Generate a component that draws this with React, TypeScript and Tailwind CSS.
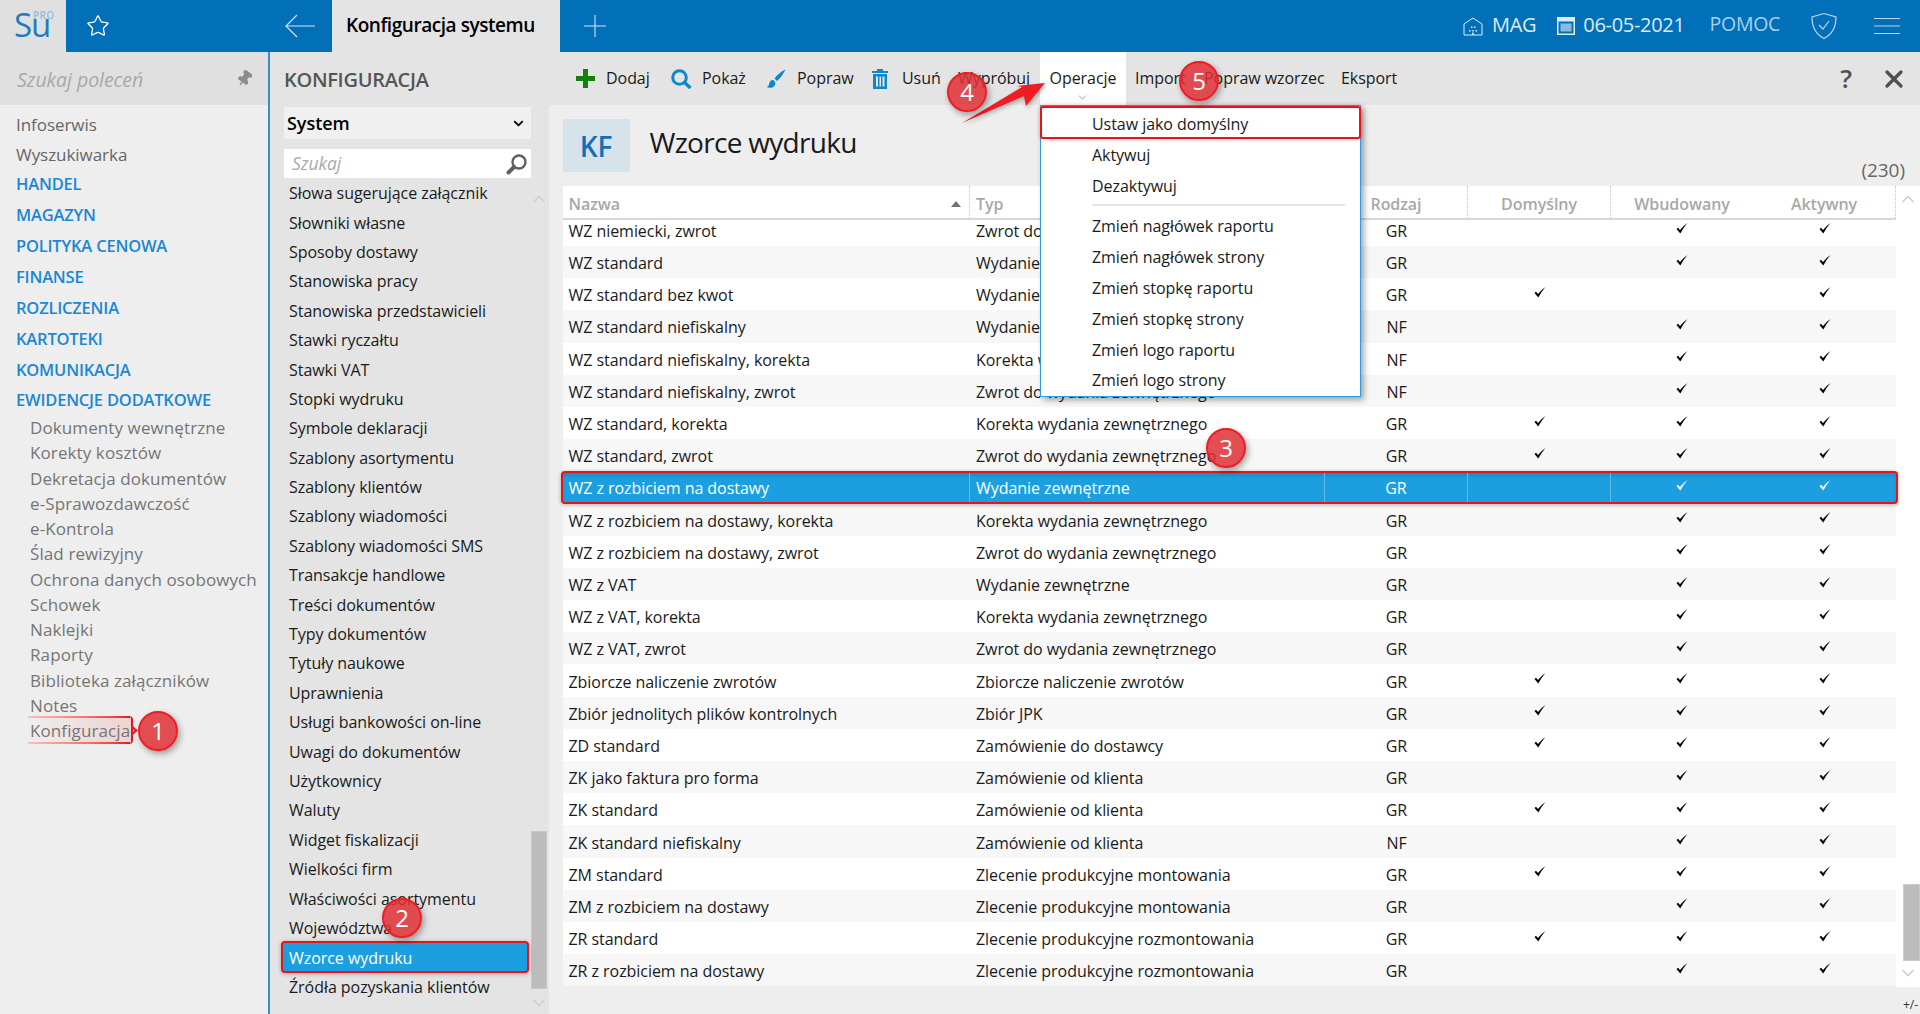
import React from 'react';
import { Star, Pin, ChevronDown, ChevronUp, X } from 'lucide-react';

const sideTop = ['Infoserwis', 'Wyszukiwarka'];
const sideGroups = ['HANDEL', 'MAGAZYN', 'POLITYKA CENOWA', 'FINANSE', 'ROZLICZENIA', 'KARTOTEKI', 'KOMUNIKACJA', 'EWIDENCJE DODATKOWE'];
const sideSub = ['Dokumenty wewnętrzne', 'Korekty kosztów', 'Dekretacja dokumentów', 'e-Sprawozdawczość', 'e-Kontrola', 'Ślad rewizyjny', 'Ochrona danych osobowych', 'Schowek', 'Naklejki', 'Raporty', 'Biblioteka załączników', 'Notes'];

const panelItems = ['Słowa sugerujące załącznik', 'Słowniki własne', 'Sposoby dostawy', 'Stanowiska pracy', 'Stanowiska przedstawicieli', 'Stawki ryczałtu', 'Stawki VAT', 'Stopki wydruku', 'Symbole deklaracji', 'Szablony asortymentu', 'Szablony klientów', 'Szablony wiadomości', 'Szablony wiadomości SMS', 'Transakcje handlowe', 'Treści dokumentów', 'Typy dokumentów', 'Tytuły naukowe', 'Uprawnienia', 'Usługi bankowości on-line', 'Uwagi do dokumentów', 'Użytkownicy', 'Waluty', 'Widget fiskalizacji', 'Wielkości firm', 'Właściwości asortymentu', 'Województwa'];

const WYD = 'Wydanie zewnętrzne';
const KOR = 'Korekta wydania zewnętrznego';
const ZWR = 'Zwrot do wydania zewnętrznego';
const ZAM = 'Zamówienie od klienta';
const MON = 'Zlecenie produkcyjne montowania';
const ROZ = 'Zlecenie produkcyjne rozmontowania';

const rows: [string, string, string, boolean, boolean][] = [
  ['WZ niemiecki, zwrot', ZWR, 'GR', false, true],
  ['WZ standard', WYD, 'GR', false, true],
  ['WZ standard bez kwot', WYD, 'GR', true, false],
  ['WZ standard niefiskalny', WYD, 'NF', false, true],
  ['WZ standard niefiskalny, korekta', KOR, 'NF', false, true],
  ['WZ standard niefiskalny, zwrot', ZWR, 'NF', false, true],
  ['WZ standard, korekta', KOR, 'GR', true, true],
  ['WZ standard, zwrot', ZWR, 'GR', true, true],
  ['WZ z rozbiciem na dostawy', WYD, 'GR', false, true],
  ['WZ z rozbiciem na dostawy, korekta', KOR, 'GR', false, true],
  ['WZ z rozbiciem na dostawy, zwrot', ZWR, 'GR', false, true],
  ['WZ z VAT', WYD, 'GR', false, true],
  ['WZ z VAT, korekta', KOR, 'GR', false, true],
  ['WZ z VAT, zwrot', ZWR, 'GR', false, true],
  ['Zbiorcze naliczenie zwrotów', 'Zbiorcze naliczenie zwrotów', 'GR', true, true],
  ['Zbiór jednolitych plików kontrolnych', 'Zbiór JPK', 'GR', true, true],
  ['ZD standard', 'Zamówienie do dostawcy', 'GR', true, true],
  ['ZK jako faktura pro forma', ZAM, 'GR', false, true],
  ['ZK standard', ZAM, 'GR', true, true],
  ['ZK standard niefiskalny', ZAM, 'NF', false, true],
  ['ZM standard', MON, 'GR', true, true],
  ['ZM z rozbiciem na dostawy', MON, 'GR', false, true],
  ['ZR standard', ROZ, 'GR', true, true],
  ['ZR z rozbiciem na dostawy', ROZ, 'GR', false, true],
];

const Tick = ({ white }: { white?: boolean }) => (
  <svg width="12" height="11" viewBox="0 0 12 11" className={white ? 'mb-[6px] text-white' : 'mb-[6px] text-black'}>
    <path d="M0.5 6 L2 4.8 L4 7 Q7 3 11.5 0 Q7.5 4.5 4.3 10.5 Z" fill="currentColor" />
  </svg>
);

const Badge = ({ n, className }: { n: number; className: string }) => (
  <div className={`absolute z-30 w-[40px] h-[40px] rounded-full bg-[#df3036]/85 border-2 border-[#ee1c25] text-white text-[24px] flex items-center justify-center shadow-[2px_3px_6px_rgba(0,0,0,0.35)] ${className}`}>
    {n}
  </div>
);

const ToolItem = ({ w, icon, label }: { w: string; icon?: React.ReactNode; label: string }) => (
  <div className={`${w} flex items-center shrink-0`}>
    {icon}
    <span className="whitespace-nowrap mb-[2px]">{label}</span>
  </div>
);

export default function App() {
  return (
    <div className="relative w-[1920px] h-[1014px] overflow-hidden flex flex-col font-['Open_Sans',sans-serif] text-[16px] tracking-[-0.05px] bg-[#eeeeee]">
      {/* top bar */}
      <div className="h-[52px] shrink-0 bg-[#0270b9] flex items-center text-white">
        <div className="relative w-[66px] h-full bg-[#e0e0e0] text-[#1c7cc4]">
          <span className="absolute left-[14px] top-[5px] text-[33px] leading-[40px] font-medium tracking-[-1px]">Su</span>
          <span className="absolute left-[33px] top-[10px] text-[10px] leading-[10px] font-semibold tracking-[0.4px] text-[#8dbfe0]">PRO</span>
        </div>
        <Star size={24} strokeWidth={1.3} className="ml-[20px]" />
        <svg width="30" height="24" viewBox="0 0 30 24" fill="none" stroke="currentColor" strokeWidth="1.2" className="ml-[175px] text-[#cfe4f3]">
          <path d="M30 12H1M12 1 1 12l11 11" />
        </svg>
        <div className="ml-[17px] w-[228px] h-full bg-[#e4e4e4] text-black flex items-center pl-[14px] pb-[2px] text-[19px] font-semibold tracking-[-0.45px]">
          Konfiguracja systemu
        </div>
        <svg width="24" height="24" viewBox="0 0 24 24" fill="none" stroke="currentColor" strokeWidth="1.1" className="ml-[23px] text-[#cfe4f3]">
          <path d="M12 1v22M1 12h22" />
        </svg>
        <div className="ml-auto flex items-center text-[#dcecf7] text-[20px] tracking-[-0.3px]">
          <svg width="20" height="20" viewBox="0 0 20 20" fill="none" stroke="currentColor" strokeWidth="1">
            <path d="M1 8 10 2l9 6v11H1z" />
            <path d="M8 10.5h1.500v1.500H8zM11 10.500h1.500v1.500H11zM6 14h1.500v1.500H6zM9.200 14h1.500v1.500H9.200zM12.500 14h1.500v1.500H12.500zM9.200 16.500h1.500V19H9.200z" fill="currentColor" stroke="none" />
          </svg>
          <span className="ml-[9px] mb-[3px]">MAG</span>
          <svg width="18" height="20" viewBox="0 0 18 20" className="ml-[21px]" fill="currentColor">
            <path fillRule="evenodd" d="M0 1h18v18H0zM1.500 5.500v12h15v-12z" />
            <path d="M3.500 7.500h11v8h-11z" opacity="0.6" />
          </svg>
          <span className="ml-[8px] mb-[3px]">06-05-2021</span>
          <span className="ml-[25px] mb-[4px] text-[19.500px] text-[#a6d0ec]">POMOC</span>
          <svg width="26" height="28" viewBox="0 0 26 28" fill="none" stroke="currentColor" strokeWidth="1.2" className="ml-[31px] text-[#b8d8ef]">
            <path d="M13 1.500 25 5c0 10-3 17-12 21.500C4 22 1 15 1 5z" />
            <path d="m8 13 4 4 6-8" />
          </svg>
          <svg width="26" height="18" viewBox="0 0 26 18" fill="none" stroke="currentColor" strokeWidth="1.2" className="ml-[37px] mr-[20px] text-[#b8d8ef]">
            <path d="M0 1.500h26M0 9h26M0 16.500h26" />
          </svg>
        </div>
      </div>

      <div className="flex-1 flex min-h-0">
        {/* left navigation */}
        <aside className="w-[268px] shrink-0 bg-[#eeeeee] text-[#666666]">
          <div className="h-[53px] bg-[#e0e0e0] flex items-center justify-between pl-[17px] pr-[15px] text-[19.5px] italic text-[#a8a8a8]">
            <span className="mt-[2px]">Szukaj poleceń</span>
            <Pin size={17} className="text-[#8c8c8c] rotate-[35deg]" fill="currentColor" />
          </div>
          <div className="pl-[16px] pt-[5px]">
            {sideTop.map((t) => (
              <div key={t} className="h-[29.6px] flex items-center text-[17px]">{t}</div>
            ))}
            {sideGroups.map((t) => (
              <div key={t} className="h-[30.9px] flex items-center text-[#1a87d6] text-[16.5px] font-semibold tracking-[-0.2px]">{t}</div>
            ))}
            <div className="pl-[14px] -mt-[1px] text-[17px] tracking-[0.1px]">
              {sideSub.map((t) => (
                <div key={t} className="h-[25.26px] flex items-center text-[#757575] whitespace-nowrap">{t}</div>
              ))}
              <div className="relative h-[25.2px] flex items-center text-[#757575]">
                <div className="absolute -left-[2px] top-[-2px] w-[105px] h-[28px] rounded-r-[4px] border-r-2 border-[#e8141c] bg-linear-to-r from-transparent to-[#f0d2d2]" />
                <div className="absolute -left-[2px] top-[-2px] w-[102px] h-[2px] bg-linear-to-r from-[#f6c0c0] to-[#e8141c]" />
                <div className="absolute -left-[2px] top-[24px] w-[102px] h-[2px] bg-linear-to-r from-[#f6c0c0] to-[#e8141c]" />
                <div className="absolute left-[99px] top-[9px] w-[7px] h-[7px] rotate-45 border-t-2 border-r-2 border-[#e8141c]" />
                <span className="relative">Konfiguracja</span>
              </div>
            </div>
          </div>
        </aside>
        <div className="w-[2px] shrink-0 bg-[#3e8cc6]" />

        {/* configuration panel */}
        <div className="w-[279px] shrink-0 bg-[#e4e4e4] flex flex-col">
          <div className="h-[53px] shrink-0 flex items-center pl-[14px] pt-[3px] text-[20px] font-semibold text-[#555555] tracking-[-0.3px]">KONFIGURACJA</div>
          <div className="flex-1 flex min-h-0">
            <div className="w-[261px] pl-[14px] shrink-0">
              <div className="mt-[2px] h-[32px] w-[247px] bg-[#f0f0f0] flex items-center justify-between pl-[3px] pr-[5px] text-[18px] font-semibold text-black">
                System
                <ChevronDown size={15} strokeWidth={3} />
              </div>
              <div className="mt-[10px] h-[29px] w-[247px] bg-white flex items-center justify-between pl-[8px] pr-[3px] text-[17.5px] italic text-[#aaaaaa]">
                Szukaj
                <svg width="22" height="22" viewBox="0 0 22 22" fill="none" stroke="#606060">
                  <circle cx="13" cy="9" r="6.5" strokeWidth="2.4" />
                  <path d="M8 14l-5.500 5.500" strokeWidth="4" strokeLinecap="round" />
                </svg>
              </div>
              <div className="text-[#1a1a1a] whitespace-nowrap">
                {panelItems.map((t) => (
                  <div key={t} className="h-[29.4px] flex items-center pl-[5px] pt-[1px]">{t}</div>
                ))}
                <div className="relative z-10 -ml-[3px] -my-[1px] h-[32px] w-[248px] flex items-center pl-[6px] pt-[1px] bg-[#1b9fe1] text-white border-2 border-[#e8141c] rounded-[4px] shadow-[0_1px_4px_rgba(0,0,0,0.3)]">
                  Wzorce wydruku
                </div>
                <div className="h-[29.4px] flex items-center pl-[5px]">Źródła pozyskania klientów</div>
              </div>
            </div>
            <div className="w-[16px] flex flex-col items-center pt-[84px]">
              <ChevronUp size={20} className="text-[#cfcfcf]" />
              <div className="mt-[622px] w-[16px] h-[158px] shrink-0 bg-[#bcbcbc] border border-[#c8c8c8]" />
              <ChevronDown size={20} className="mt-[4px] text-[#cfcfcf]" />
            </div>
          </div>
        </div>

        {/* main content */}
        <main className="flex-1 min-w-0 flex flex-col">
          <div className="h-[53px] shrink-0 bg-[#e4e4e4] flex items-center pl-[27px] text-[#1a1a1a]">
            <ToolItem w="w-[95px]" label="Dodaj" icon={
              <svg width="19" height="19" viewBox="0 0 19 19" className="mr-[11px] text-[#108010]" fill="currentColor">
                <path d="M7 0h5v7h7v5h-7v7H7v-7H0V7h7z" />
              </svg>
            } />
            <ToolItem w="w-[95px]" label="Pokaż" icon={
              <svg width="21" height="20" viewBox="0 0 21 20" className="mr-[10px] text-[#1187c9]" fill="none" stroke="currentColor">
                <circle cx="8.500" cy="8.500" r="6.800" strokeWidth="3" />
                <path d="M13.500 13.500 19.500 19" strokeWidth="3.500" />
              </svg>
            } />
            <ToolItem w="w-[106px]" label="Popraw" icon={
              <svg width="20" height="20" viewBox="0 0 20 20" className="mr-[11px] text-[#1187c9]" fill="currentColor">
                <path d="M19.500.500C16 2 11 6 8.500 9.500l2.500 2.500C14.500 9 18 4 19.500.500zM7 11c-3 0-3.500 2.500-4 4.500-.3 1.300-1 2-2.500 2.500 3 1.500 7 1 8.500-2 .8-1.800 0-4-2-5z" />
              </svg>
            } />
            <ToolItem w="w-[86px]" label="Usuń" icon={
              <svg width="16" height="20" viewBox="0 0 16 20" className="mr-[14px] text-[#1187c9]" fill="currentColor">
                <path d="M5 0h6v2h5v2H0V2h5zM1 5h14v15H1zm3 2.500v10h2v-10zm3.500 0v10h1.500v-10zm3 0v10h2v-10z" fillRule="evenodd" />
              </svg>
            } />
            <ToolItem w="w-[82px]" label="Wypróbuj" />
            <div className="relative w-[86px] h-full shrink-0 bg-white flex items-center justify-center pb-[2px]">
              Operacje
              <ChevronDown size={13} strokeWidth={1.5} className="absolute left-[36px] top-[39px] text-[#8a8a8a]" />
            </div>
            <div className="ml-[9px] w-[69px] mb-[2px]">Import</div>
            <div className="w-[137px] whitespace-nowrap mb-[2px]">Popraw wzorzec</div>
            <div className="mb-[2px]">Eksport</div>
            <div className="ml-auto mr-[12px] flex items-center text-[#505050]">
              <span className="text-[26px] font-semibold mr-[28px]">?</span>
              <X size={28} strokeWidth={2.8} />
            </div>
          </div>

          <div className="flex-1 flex flex-col min-h-0">
            <div className="h-[81px] shrink-0 pt-[14px] pl-[13.5px] flex">
              <div className="w-[67px] h-[53px] bg-[#d7e3eb] text-[#1070b8] text-[28px] font-semibold flex items-center justify-center">KF</div>
              <div className="ml-[20px] h-[53px] flex items-center pb-[7px] text-[28px] text-[#1a1a1a] tracking-[-0.7px]">Wzorce wydruku</div>
              <div className="ml-auto self-end mr-[15px] mb-[2px] text-[19px] text-[#666666]">(230)</div>
            </div>

            <div className="flex ml-[13.5px] h-[801px] shrink-0">
              <div className="w-[1333.5px] shrink-0 flex flex-col">
                {/* table head */}
                <div className="relative z-[1] h-[34px] shrink-0 bg-white flex items-center text-[#a8a8a8] font-semibold border-b-2 border-[#d8d8d8]">
                  <div className="w-[407.5px] h-full flex items-center justify-between pt-[4px] pl-[6px] pr-[8px] border-r border-dotted border-[#c4c4c4]">
                    Nazwa
                    <svg width="10" height="6" viewBox="0 0 10 6" className="text-[#707070]"><path d="M5 0l5 6H0z" fill="currentColor" /></svg>
                  </div>
                  <div className="w-[355px] h-full flex items-center pt-[4px] pl-[6px] border-r border-dotted border-[#c4c4c4]">Typ</div>
                  <div className="w-[143px] h-full flex items-center justify-center pt-[4px] border-r border-dotted border-[#c4c4c4]">Rodzaj</div>
                  <div className="w-[143px] h-full flex items-center justify-center pt-[4px] border-r border-dotted border-[#c4c4c4]">Domyślny</div>
                  <div className="w-[142px] h-full flex items-center justify-center pt-[4px]">Wbudowany</div>
                  <div className="w-[143px] h-full flex items-center justify-center pt-[4px] border-r border-dotted border-[#c4c4c4]">Aktywny</div>
                </div>
                {/* table rows */}
                <div className="flex-1 min-h-0">
                  <div className="h-[26px] overflow-hidden bg-white">
                    <div className="-mt-[6px]">
                      <TableRow row={rows[0]} index={0} />
                    </div>
                  </div>
                  {rows.slice(1).map((r, i) => (
                    <TableRow key={r[0]} row={r} index={i + 1} />
                  ))}
                </div>
              </div>
              <div className="flex-1 bg-white flex flex-col items-center pt-[3px]">
                <ChevronUp size={20} className="text-[#cfcfcf]" />
                <div className="mt-[675px] w-[17px] ml-[7px] h-[77px] shrink-0 bg-[#bcbcbc] border border-[#cccccc]" />
                <ChevronDown size={20} className="mt-[2px] text-[#cfcfcf]" />
              </div>
            </div>
            <div className="flex-1 flex justify-end pr-[2px] pt-[10px] text-[12px] leading-[16px] text-[#333333]">+/-</div>
          </div>
        </main>
      </div>

      {/* Operacje dropdown */}
      <div className="absolute z-20 left-[1040px] top-[105px] w-[321px] h-[292px] bg-white border border-[#2b9de0] shadow-[3px_3px_6px_rgba(0,0,0,0.35)] text-[#1a1a1a]">
        <div className="-mx-px h-[33px] border-2 border-[#e8141c] rounded-[3px] flex items-center pl-[50px] pt-[2px] shadow-[0_0_4px_rgba(232,20,28,0.4)]">Ustaw jako domyślny</div>
        <div className="h-[31px] flex items-center pl-[51px]">Aktywuj</div>
        <div className="h-[31px] flex items-center pl-[51px]">Dezaktywuj</div>
        <div className="mt-[3px] mb-[5px] ml-[51px] mr-[15px] h-[2px] bg-[#e6e6e6]" />
        {['Zmień nagłówek raportu', 'Zmień nagłówek strony', 'Zmień stopkę raportu', 'Zmień stopkę strony', 'Zmień logo raportu', 'Zmień logo strony'].map((t) => (
          <div key={t} className="h-[30.8px] flex items-center pl-[51px]">{t}</div>
        ))}
      </div>

      {/* annotations */}
      <svg width="90" height="45" viewBox="0 0 90 45" className="absolute z-30 left-[960px] top-[81px]" style={{ filter: 'drop-shadow(1px 2px 2px rgba(0,0,0,.3))' }}>
        <path d="M2 42 62 6 57 5 85 2 66 25 64 15z" fill="#ee1c25" />
      </svg>
      <Badge n={1} className="left-[138px] top-[711px]" />
      <Badge n={2} className="left-[382px] top-[898px]" />
      <Badge n={3} className="left-[1206px] top-[428px]" />
      <Badge n={4} className="left-[947px] top-[72px]" />
      <Badge n={5} className="left-[1179px] top-[61px]" />
    </div>
  );
}

function TableRow({ row, index }: { row: [string, string, string, boolean, boolean]; index: number }) {
  const selected = row[0] === 'WZ z rozbiciem na dostawy';
  const bg = selected
    ? 'relative -ml-[2px] w-[1337.5px] h-[33px] -my-[0.4px] bg-[#1b9fe1] text-white border-2 border-[#e8141c] rounded-[4px] shadow-[0_1px_4px_rgba(0,0,0,0.3),inset_0_3px_3px_rgba(0,0,0,0.1)]'
    : `h-[32.2px] text-[#1a1a1a] ${index % 2 === 0 ? 'bg-white' : 'bg-[#f7f7f7]'}`;
  const line = selected ? 'border-r border-[#5fbbe9]' : '';
  return (
    <div className={`flex items-center whitespace-nowrap ${bg}`}>
      <div className={`w-[407.5px] h-full flex items-center pl-[6px] pt-[2px] ${line}`}>{row[0]}</div>
      <div className={`w-[355px] h-full flex items-center pl-[6px] pt-[2px] ${line}`}>{row[1]}</div>
      <div className={`w-[143px] h-full flex items-center justify-center pt-[2px] ${line}`}>{row[2]}</div>
      <div className={`w-[143px] h-full flex items-center justify-center pt-[2px] ${line}`}>{row[3] && <Tick white={selected} />}</div>
      <div className="w-[142px] h-full flex items-center justify-center pt-[2px]">{row[4] && <Tick white={selected} />}</div>
      <div className="w-[143px] h-full flex items-center justify-center pt-[2px]"><Tick white={selected} /></div>
    </div>
  );
}
